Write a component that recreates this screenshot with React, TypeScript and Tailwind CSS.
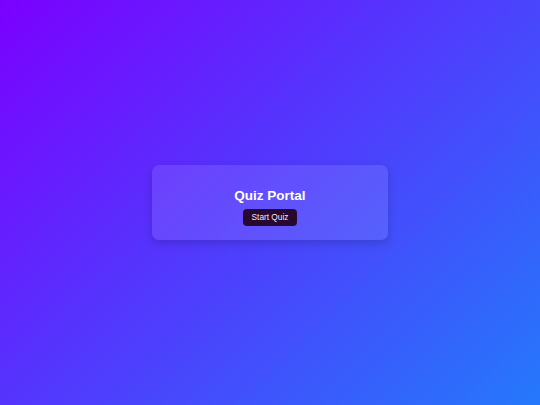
export default function App() {
  return (
    <div className="w-[540px] h-[405px] flex items-center justify-center bg-[linear-gradient(135deg,#7b00ff,#2479fb)] font-['Liberation_Sans',Arial,sans-serif]">
      <div className="w-[236px] h-[75px] rounded-[7px] bg-white/10 shadow-[0_3px_10px_rgba(0,0,0,0.18)] flex flex-col items-center pt-[23px]">
        <h1 className="text-[13.5px] leading-[16px] font-bold text-white">Quiz Portal</h1>
        <button className="mt-[5px] h-[17px] px-[9px] rounded-[4px] bg-[#28082f] text-[8.3px] leading-[17px] text-[#f3e9f5]">
          Start Quiz
        </button>
      </div>
    </div>
  );
}
